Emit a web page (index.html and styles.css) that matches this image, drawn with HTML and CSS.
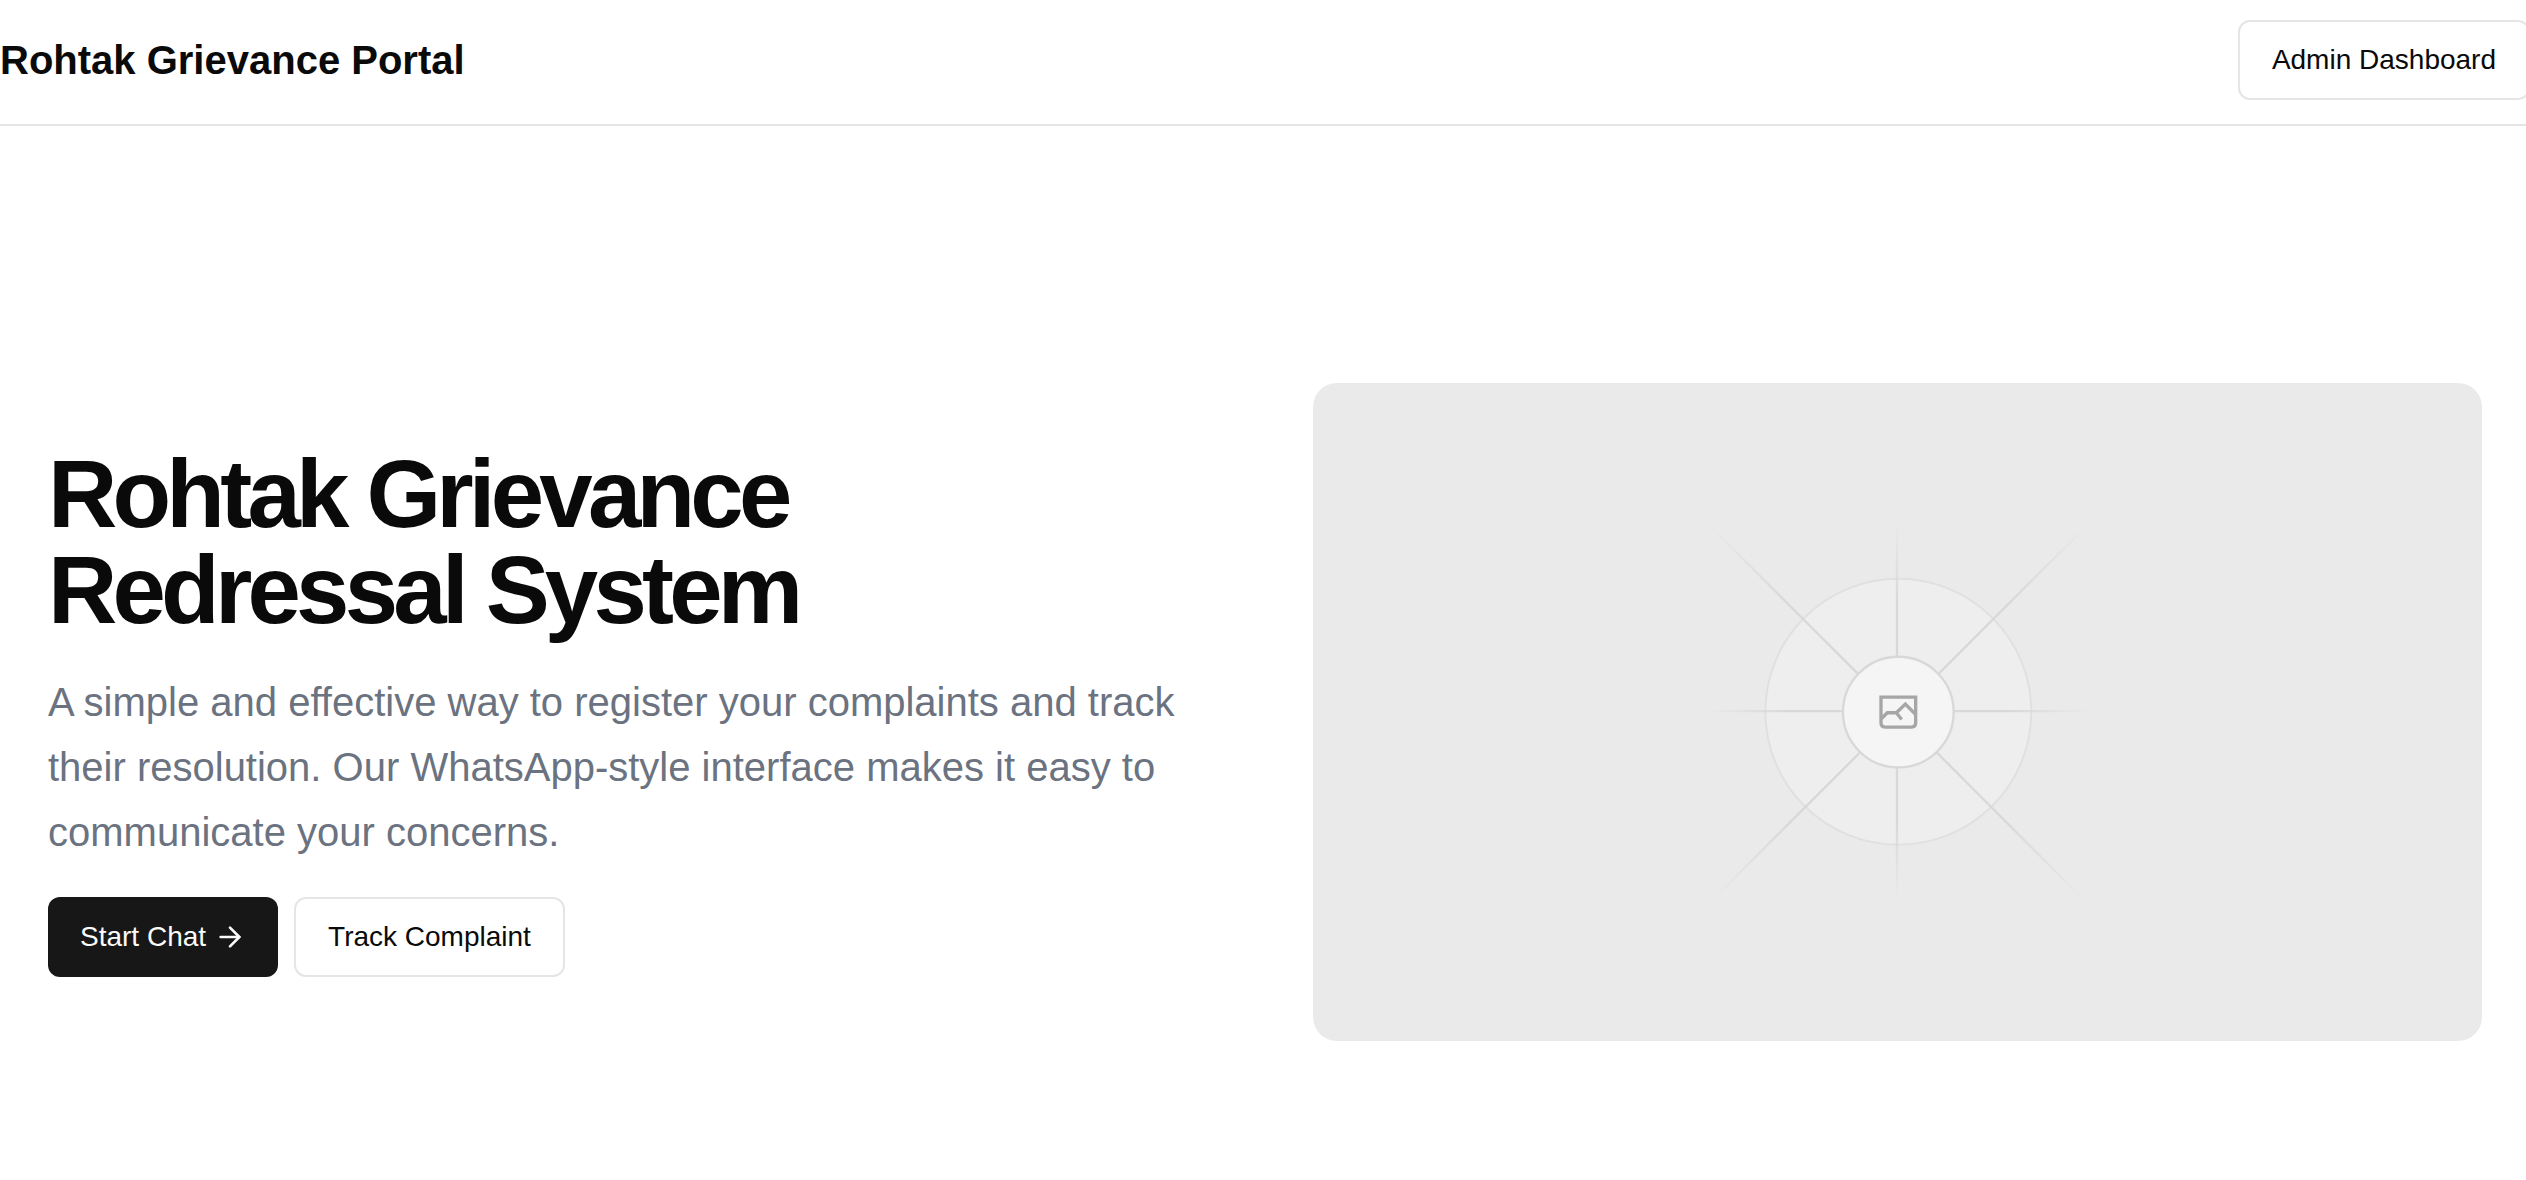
FILE: index.html
```html
<!DOCTYPE html>
<html lang="en">
<head>
  <meta charset="utf-8">
  <meta name="viewport" content="width=device-width, initial-scale=1">
  <title>Rohtak Grievance Portal</title>
  <link rel="stylesheet" href="styles.css">
</head>
<body>
  <div class="page">
    <header class="header">
      <span class="brand">Rohtak Grievance Portal</span>
      <button class="button button-outline" type="button">Admin Dashboard</button>
    </header>
    <main class="hero">
      <section class="intro">
        <h1 class="title">Rohtak Grievance Redressal System</h1>
        <p class="lead">A simple and effective way to register your complaints and track their resolution. Our WhatsApp-style interface makes it easy to communicate your concerns.</p>
        <div class="actions">
          <button class="button button-primary" type="button">
            Start Chat
            <svg class="arrow" viewBox="0 0 24 24" fill="none" stroke="currentColor" stroke-width="2" stroke-linecap="round" stroke-linejoin="round" aria-hidden="true"><path d="M5 12h14"/><path d="m12 5 7 7-7 7"/></svg>
          </button>
          <button class="button button-outline" type="button">Track Complaint</button>
        </div>
      </section>
      <svg class="preview" viewBox="-1131 -384 3507 1974" preserveAspectRatio="xMidYMid slice" role="img" aria-label="Image placeholder">
        <defs>
          <linearGradient id="fade-v" gradientUnits="userSpaceOnUse" x1="621" y1="30" x2="621" y2="1172">
            <stop stop-color="#d8d8d8" stop-opacity="0"/><stop offset=".208" stop-color="#d8d8d8"/><stop offset=".792" stop-color="#d8d8d8"/><stop offset="1" stop-color="#d8d8d8" stop-opacity="0"/>
          </linearGradient>
          <linearGradient id="fade-h" href="#fade-v" gradientUnits="userSpaceOnUse" x1="54" y1="601" x2="1196" y2="601"/>
          <linearGradient id="fade-d" href="#fade-v" gradientUnits="userSpaceOnUse" x1="60" y1="45" x2="1185" y2="1170"/>
          <linearGradient id="fade-u" href="#fade-v" gradientUnits="userSpaceOnUse" x1="1190" y1="45" x2="65" y2="1170"/>
        </defs>
        <circle cx="625" cy="603" r="399" fill="#eeeeee" stroke="#e0e0e0" stroke-width="6"/>
        <g stroke-width="7">
          <path d="M621 30V1172" stroke="url(#fade-v)"/>
          <path d="M54 601H1196" stroke="url(#fade-h)"/>
          <path d="M60 45L1185 1170" stroke="url(#fade-d)"/>
          <path d="M1190 45L65 1170" stroke="url(#fade-u)"/>
        </g>
        <circle cx="625" cy="604" r="166" fill="#f5f5f5" stroke="#d8d8d8" stroke-width="7"/>
        <path d="M573 559H677V637Q677 649 665 649H585Q573 649 573 637ZM574 624L592 606H619L646 580L677 611M619 606L635 626" fill="none" stroke="#a6a6a6" stroke-width="10"/>
      </svg>
    </main>
  </div>
</body>
</html>
```
FILE: styles.css
```css
* {
  box-sizing: border-box;
}

body {
  margin: 0;
  overflow-x: hidden;
  background: #ffffff;
  color: #0a0a0a;
  font-family: "Liberation Sans", Arial, sans-serif;
}

/* The content runs slightly past the right edge of the window. */
.page {
  margin-right: -4px;
}

.header {
  display: flex;
  align-items: center;
  justify-content: space-between;
  padding: 20px 0 24px;
  border-bottom: 2px solid #e5e5e5;
}

.brand {
  font-size: 40px;
  font-weight: 700;
  line-height: 56px;
}

.button {
  display: inline-flex;
  align-items: center;
  justify-content: center;
  gap: 8px;
  height: 80px;
  padding: 0 32px;
  border: 0;
  border-radius: 12px;
  font-family: inherit;
  font-size: 28px;
  line-height: 40px;
  white-space: nowrap;
  cursor: pointer;
}

.button-outline {
  border: 2px solid #e5e5e5;
  background: #ffffff;
  color: #0a0a0a;
}

.button-primary {
  background: #171717;
  color: #fafafa;
}

.arrow {
  width: 32px;
  height: 32px;
}

.hero {
  display: grid;
  grid-template-columns: 1fr 1fr;
  align-items: center;
  gap: 96px;
  padding: 257px 48px 128px;
}

.intro {
  display: flex;
  flex-direction: column;
  gap: 32px;
}

.title {
  margin: 0;
  font-size: 96px;
  font-weight: 700;
  line-height: 96px;
  letter-spacing: -0.05em;
}

.lead {
  margin: 0;
  color: #6b7280;
  font-size: 40px;
  line-height: 65px;
}

.actions {
  display: flex;
  flex-wrap: wrap;
  gap: 16px;
}

.preview {
  display: block;
  width: 100%;
  aspect-ratio: 16 / 9;
  border-radius: 24px;
  background: #eaeaea;
}

@media (max-width: 1400px) {
  .hero {
    grid-template-columns: 1fr;
    padding-top: 96px;
  }
}
```
